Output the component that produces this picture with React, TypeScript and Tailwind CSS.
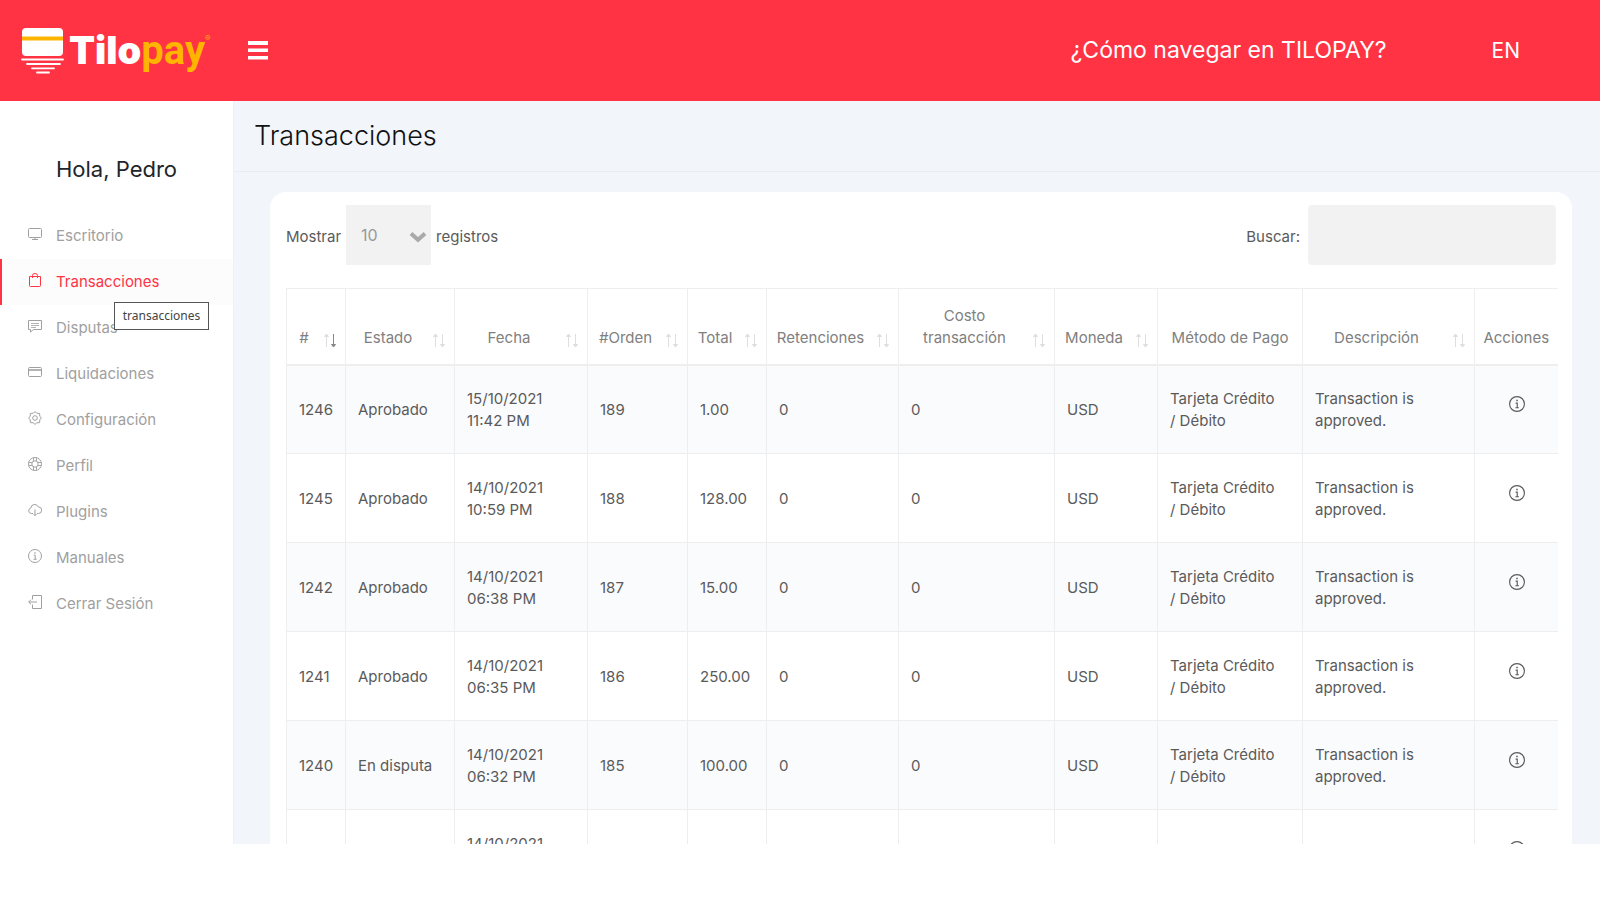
import type {ReactNode} from "react";

const icons: Record<string, ReactNode> = {
    desktop: (
        <>
            <rect x="0.500" y="1.500" width="13" height="9" rx="1"/>
            <path d="M7 10.500V12.500M4 12.500H10"/>
        </>
    ),
    bag: (
        <>
            <path d="M1.500 3.500H12.500V12.500Q12.500 13.500 11.500 13.500H2.500Q1.500 13.500 1.500 12.500Z"/>
            <path d="M4.500 5V2.500Q4.500 0.500 7 0.500T9.500 2.500V5"/>
        </>
    ),
    comment: (
        <>
            <path d="M0.500 1.500H13.500V10.500H5.500L2.500 13V10.500H0.500Z"/>
            <path d="M3 4.500H11M3 6.500H11M3 8.500H8" strokeWidth="0.800"/>
        </>
    ),
    card: (
        <>
            <rect x="0.500" y="2.500" width="13" height="9" rx="1"/>
            <path d="M0.500 5H13.500" strokeWidth="1.600"/>
        </>
    ),
    gear: (
        <>
            <path
                d="M7 .5L8.600 2.200L11.600 2.400L11.800 5.400L13.500 7L11.800 8.600L11.600 11.600L8.600 11.800L7 13.500L5.400 11.800L2.400 11.600L2.200 8.600L.5 7L2.200 5.400L2.400 2.400L5.400 2.200Z"
                strokeLinejoin="round"/>
            <circle cx="7" cy="7" r="2.300"/>
        </>
    ),
    support: (
        <>
            <circle cx="7" cy="7" r="6.500"/>
            <circle cx="7" cy="7" r="3.200"/>
            <path
                d="M5.500 .7V4M8.500 .7V4M5.500 10V13.300M8.500 10V13.300M.7 5.500H4M.7 8.500H4M10 5.500H13.300M10 8.500H13.300"
                strokeWidth="0.900"/>
        </>
    ),
    cloud: (
        <>
            <path
                d="M5 10.500H3.300A2.800 2.800 0 0 1 2.800 5A3.900 3.900 0 0 1 10.300 3.900A3.300 3.300 0 0 1 10.500 10.500H9"/>
            <path d="M7 6.500V12.500M5.500 11L7 12.500L8.500 11"/>
        </>
    ),
    info: (
        <>
            <circle cx="7" cy="7" r="6.500"/>
            <path d="M7 3.300V4.700" strokeWidth="1.300"/>
            <path d="M5.800 6.200H7.200V10.300M5.600 10.300H8.600"/>
        </>
    ),
    logout: (
        <>
            <path d="M4.500 4.500V0.500H13.500V13.500H4.500V9.500"/>
            <path d="M9 7H.8M3 4.700L.7 7L3 9.300"/>
        </>
    )
};

function Icon({name, className}: { name: string; className?: string }) {
    return (
        <svg viewBox="0 0 14 14" fill="none" stroke="currentColor" className={className} aria-hidden="true">
            {icons[name]}
        </svg>
    );
}

const menu = [
    {label: "Escritorio", icon: "desktop"},
    {label: "Transacciones", icon: "bag", active: true, tooltip: "transacciones"},
    {label: "Disputas", icon: "comment"},
    {label: "Liquidaciones", icon: "card"},
    {label: "Configuración", icon: "gear"},
    {label: "Perfil", icon: "support"},
    {label: "Plugins", icon: "cloud"},
    {label: "Manuales", icon: "info"},
    {label: "Cerrar Sesión", icon: "logout"}
];

const columns = [
    {label: "#", width: "w-[59px]", sort: "desc"},
    {label: "Estado", width: "w-[109px]", sort: "none"},
    {label: "Fecha", width: "w-[133px]", sort: "none"},
    {label: "#Orden", width: "w-[100px]", sort: "none"},
    {label: "Total", width: "w-[79px]", sort: "none"},
    {label: "Retenciones", width: "w-[132px]", sort: "none"},
    {label: "Costo transacción", width: "w-[156px]", sort: "none"},
    {label: "Moneda", width: "w-[103px]", sort: "none"},
    {label: "Método de Pago", width: "w-[145px]"},
    {label: "Descripción", width: "w-[172px]", sort: "none"},
    {label: "Acciones", width: "w-[83px]"}
];

const approved = {
    status: "Aprobado",
    fee: "0",
    currency: "USD",
    method: ["Tarjeta Crédito", "/ Débito"],
    description: ["Transaction is", "approved."]
};

const transactions = [
    {...approved, id: "1246", day: "15/10/2021", time: "11:42 PM", order: "189", total: "1.00"},
    {...approved, id: "1245", day: "14/10/2021", time: "10:59 PM", order: "188", total: "128.00"},
    {...approved, id: "1242", day: "14/10/2021", time: "06:38 PM", order: "187", total: "15.00"},
    {...approved, id: "1241", day: "14/10/2021", time: "06:35 PM", order: "186", total: "250.00"},
    {...approved, id: "1240", status: "En disputa", day: "14/10/2021", time: "06:32 PM", order: "185", total: "100.00"},
    {id: "", status: "", day: "14/10/2021", time: "\u00a0", order: "", total: "", fee: "", currency: "", method: [], description: []}
];

function Logo() {
    return (
        <a href="#" aria-label="Tilopay" className="flex items-center">
            <svg width="44" height="46" viewBox="0 0 44 46">
                <rect x="1" y="0" width="41" height="28" rx="4" fill="#fff"/>
                <rect x="1" y="8.500" width="41" height="4" fill="#ffb400"/>
                <g stroke="#fff" strokeWidth="1.800" strokeLinecap="round">
                    <path d="M1 31.500H42"/>
                    <path d="M6 36H39"/>
                    <path d="M11 40.300H33"/>
                    <path d="M16 44.500H28"/>
                </g>
            </svg>
            <span className="ml-1 flex items-baseline text-[38px] leading-10 font-black text-white">
                Tilo
                <span className="font-['Roboto'] text-[40px] font-bold text-[#ffb400]">pay</span>
                <span className="self-start text-[8px] leading-4 font-normal text-[#ffb400]">®</span>
            </span>
        </a>
    );
}

function SortArrows({sort}: { sort: string }) {
    return (
        <svg width="14" height="15" viewBox="0 0 14 15" fill="none" className="absolute right-2 bottom-4">
            <g stroke="#dedede" fill="#dedede">
                <path d="M3.500 14V3"/>
                <path d="M3.500 1L1.500 3.500H5.500Z"/>
            </g>
            <g stroke={sort === "desc" ? "#888" : "#dedede"} fill={sort === "desc" ? "#888" : "#dedede"}>
                <path d="M10.500 1V12"/>
                <path d="M10.500 14L8.500 11.500H12.500Z"/>
            </g>
        </svg>
    );
}

function Sidebar() {
    return (
        <aside className="w-[234px] shrink-0 border-r border-[#eef1f6] bg-white">
            <h2 className="pt-[52px] text-center text-[22px] leading-8 text-[#212529]">Hola, Pedro</h2>
            <nav className="mt-7">
                {menu.map(({label, icon, active, tooltip}) => (
                    <a
                        key={label}
                        href="#"
                        className={
                            active
                                ? "relative flex h-[46px] items-center gap-[14px] border-l-2 border-[#ff3344] bg-[#fcfcfc] pl-[26px] text-[15px] text-[#ff3344]"
                                : "flex h-[46px] items-center gap-[14px] pl-7 text-[15px] text-[#a0a0a0]"
                        }
                    >
                        <Icon name={icon} className="mb-1 size-[14px] shrink-0"/>
                        {label}
                        {tooltip && (
                            <span
                                className="absolute top-[43px] left-28 z-10 flex h-7 w-[95px] items-center justify-center border border-[#555] bg-white font-['Noto_Sans'] text-xs text-[#444]">
                                {tooltip}
                            </span>
                        )}
                    </a>
                ))}
            </nav>
        </aside>
    );
}

function Lines({lines}: { lines: string[] }) {
    return lines.map((line) => <div key={line} className="whitespace-nowrap">{line}</div>);
}

function TransactionsTable() {
    return (
        <table className="mt-[23px] w-full table-fixed border-collapse border-t border-l border-[#eee]">
            <thead>
            <tr className="h-[76px] border-b-2 border-[#eee]">
                {columns.map(({label, width, sort}) => (
                    <th
                        key={label}
                        className={`${width} relative border-l border-[#eee] pb-[15px] align-bottom leading-[22px] font-normal text-[#808080] ${sort ? "pr-8 pl-2" : "px-0"}`}
                    >
                        {label}
                        {sort && <SortArrows sort={sort}/>}
                    </th>
                ))}
            </tr>
            </thead>
            <tbody>
            {transactions.map((t) => (
                <tr key={t.id} className="h-[89px] border-b border-[#eee] odd:bg-[#fafbfd] [&>td]:border-l [&>td]:border-[#eee] [&>td]:pt-px [&>td]:pl-3">
                    <td>{t.id}</td>
                    <td>{t.status}</td>
                    <td>{t.day}<br/>{t.time}</td>
                    <td>{t.order}</td>
                    <td>{t.total}</td>
                    <td>{t.fee}</td>
                    <td>{t.fee}</td>
                    <td>{t.currency}</td>
                    <td><Lines lines={t.method}/></td>
                    <td><Lines lines={t.description}/></td>
                    <td>
                        <button aria-label="Ver detalle" className="mb-3 ml-[22px] block">
                            <Icon name="info" className="size-4"/>
                        </button>
                    </td>
                </tr>
            ))}
            </tbody>
        </table>
    );
}

export default function App() {
    return (
        <div className="flex h-screen flex-col overflow-hidden bg-white pb-14 font-['Inter',sans-serif]">
            <header className="flex h-[101px] shrink-0 items-center bg-[#ff3344] pl-[21px] text-white">
                <Logo/>
                <button aria-label="Menú" className="ml-[38px]">
                    <svg width="20" height="19" viewBox="0 0 20 19" fill="#fff">
                        <path d="M0 0H20V4H0ZM0 7.500H20V11H0ZM0 15H20V18.500H0Z"/>
                    </svg>
                </button>
                <a href="#" className="ml-auto text-[23px]">¿Cómo navegar en TILOPAY?</a>
                <a href="#" className="mr-20 ml-[105px] text-[21px]">EN</a>
            </header>

            <div className="flex min-h-0 flex-1">
                <Sidebar/>
                <main className="min-w-0 flex-1 overflow-hidden bg-[#f2f6fb]">
                    <div className="h-[71px] border-b border-[#e9edf2] pt-[17px] pl-5">
                        <h1 className="text-[27px] leading-9 font-light text-[#111]">Transacciones</h1>
                    </div>

                    <section className="mt-5 mr-7 ml-9 rounded-2xl bg-white px-4 pt-[13px] text-[15px] leading-[22px] text-[#5a5a5a]">
                        <div className="flex items-center justify-between">
                            <label className="flex items-center gap-[5px]">
                                <span className="mt-1">Mostrar</span>
                                <span className="relative">
                                    <select
                                        className="h-[60px] w-[85px] appearance-none bg-[#f2f2f2] pl-[15px] text-base text-[#999]">
                                        <option>10</option>
                                    </select>
                                    <svg width="18" height="12" viewBox="0 0 18 12" fill="none"
                                         className="pointer-events-none absolute right-[4px] bottom-[22px]">
                                        <path d="M2 2.500L9 8.800L16 2.500" stroke="#aaa" strokeWidth="4"/>
                                    </svg>
                                </span>
                                <span className="mt-1">registros</span>
                            </label>
                            <label className="flex items-center gap-2">
                                <span className="mt-1">Buscar:</span>
                                <input type="search" className="h-[60px] w-[248px] rounded bg-[#f2f2f2] px-4"/>
                            </label>
                        </div>
                        <TransactionsTable/>
                    </section>
                </main>
            </div>
        </div>
    );
}
